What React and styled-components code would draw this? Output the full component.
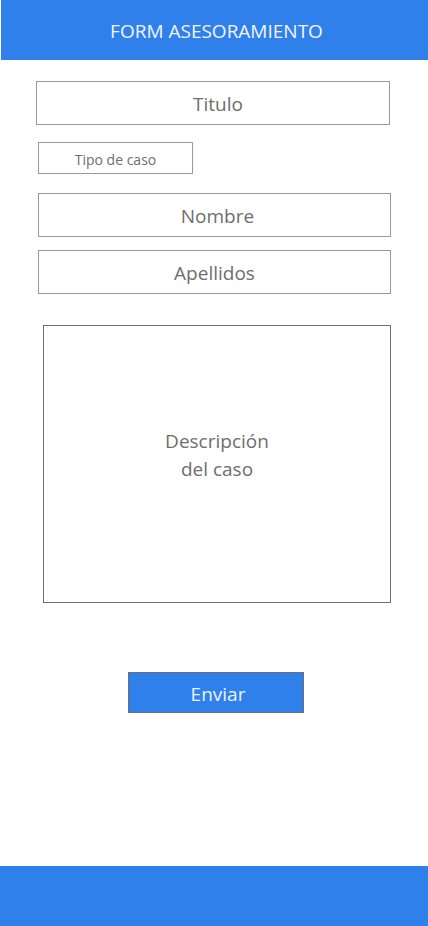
import React from 'react';
import styled, { createGlobalStyle } from 'styled-components';

const GlobalStyle = createGlobalStyle`
  html, body {
    margin: 0;
    padding: 0;
    background: #fff;
  }
  body {
    font-family: "Open Sans", "Noto Sans", sans-serif;
  }
`;

const Page = styled.div`
  min-height: 100vh;
  display: flex;
  flex-direction: column;
`;

const Header = styled.header`
  box-sizing: border-box;
  height: 60px;
  margin-left: 1px;
  padding: 2px 0 0 4px;
  background: #2f80ea;
  color: #f2f5fb;
  display: flex;
  align-items: center;
  justify-content: center;
  font-size: 19px;
`;

const Form = styled.form`
  display: flex;
  flex-direction: column;
  align-items: flex-start;
`;

const Field = styled.div`
  box-sizing: border-box;
  margin-top: ${p => p.$top}px;
  margin-left: ${p => p.$left}px;
  width: ${p => p.$width}px;
  height: ${p => p.$height}px;
  border: 1px solid #9a9a9a;
  display: flex;
  align-items: center;
  justify-content: center;
  color: #6e6e6e;
  font-size: ${p => p.$size || 19}px;
  padding-left: ${p => p.$shift || 0}px;
  padding-top: 2px;
`;

const DescBox = styled(Field)`
  border-color: #707070;
  text-align: center;
  line-height: 28px;
  padding-top: 0;
  padding-bottom: 18px;
`;

const SendButton = styled.button`
  box-sizing: border-box;
  margin-top: 69px;
  margin-left: 128px;
  width: 176px;
  height: 41px;
  background: #2f80ea;
  border: 1px solid #6f6f6f;
  color: #eef3fb;
  font-family: inherit;
  font-size: 19px;
  padding: 2px 0 0 4px;
  cursor: pointer;
`;

const Footer = styled.footer`
  margin-top: auto;
  height: 60px;
  background: #2f80ea;
`;

export default function App() {
  return (
    <Page>
      <GlobalStyle />
      <Header>FORM ASESORAMIENTO</Header>
      <Form onSubmit={e => e.preventDefault()}>
        <Field $top={21} $left={36} $width={354} $height={44} $shift={10}>Titulo</Field>
        <Field $top={17} $left={38} $width={155} $height={32} $size={14}>Tipo de caso</Field>
        <Field $top={19} $left={38} $width={353} $height={44} $shift={6}>Nombre</Field>
        <Field $top={13} $left={38} $width={353} $height={44}>Apellidos</Field>
        <DescBox $top={31} $left={43} $width={348} $height={278}>
          Descripción
          <br />
          del caso
        </DescBox>
        <SendButton type="submit">Enviar</SendButton>
      </Form>
      <Footer />
    </Page>
  );
}
